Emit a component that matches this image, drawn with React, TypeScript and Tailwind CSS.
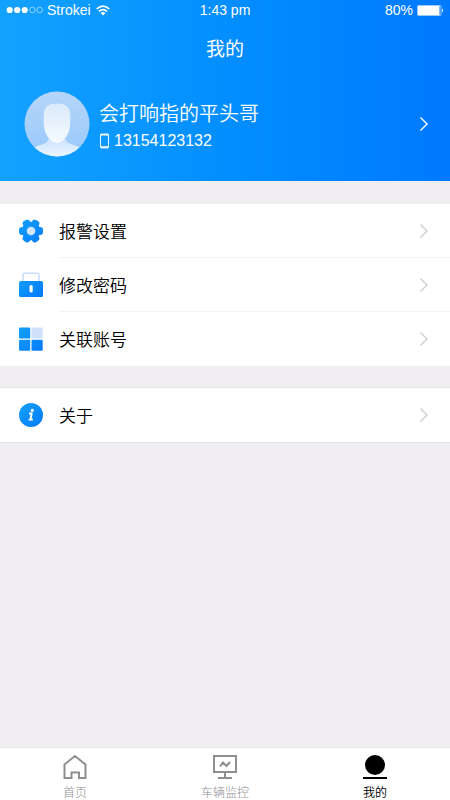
import type { ReactNode } from "react";

interface MenuItem {
  label: string;
  icon: ReactNode;
}

function BlueGradient({ id }: { id: string }) {
  return (
    <defs>
      <linearGradient id={id} x1="0" y1="0" x2="26" y2="26" gradientUnits="userSpaceOnUse">
        <stop offset="0" stopColor="#14a4fb" />
        <stop offset="1" stopColor="#0478fb" />
      </linearGradient>
    </defs>
  );
}

function GearIcon() {
  return (
    <svg width="26" height="26" viewBox="0 0 26 26" aria-hidden="true">
      <defs>
        <clipPath id="gearShape">
          <circle cx="13" cy="13" r="9.2" />
          <rect x="1" y="9" width="24" height="8" rx="3" />
          <rect x="1" y="9" width="24" height="8" rx="3" transform="rotate(60 13 13)" />
          <rect x="1" y="9" width="24" height="8" rx="3" transform="rotate(120 13 13)" />
        </clipPath>
      </defs>
      <BlueGradient id="gear" />
      <rect width="26" height="26" fill="url(#gear)" clipPath="url(#gearShape)" />
      <circle cx="13" cy="13" r="4.3" fill="#d3e6fd" />
    </svg>
  );
}

function LockIcon() {
  return (
    <svg width="26" height="26" viewBox="0 0 26 26" aria-hidden="true">
      <BlueGradient id="lock" />
      <path d="M5 9 V2.8 Q5 1.3 6.5 1.3 H19.5 Q21 1.3 21 2.8 V9" fill="none" stroke="#c9ddf8" strokeWidth="1.6" />
      <rect x="1" y="9" width="24" height="16" rx="1.5" fill="url(#lock)" />
      <rect x="11.5" y="13" width="3.2" height="7.6" rx="1.6" fill="#fff" />
    </svg>
  );
}

function GridIcon() {
  return (
    <svg width="26" height="26" viewBox="0 0 26 26" aria-hidden="true">
      <BlueGradient id="grid" />
      <rect x="1" y="1.5" width="11.2" height="11" rx="1" fill="url(#grid)" />
      <rect x="13.5" y="1.5" width="11.2" height="11" rx="1" fill="#d0e1fb" />
      <rect x="1" y="13.7" width="11.2" height="11" rx="1" fill="url(#grid)" />
      <rect x="13.5" y="13.7" width="11.2" height="11" rx="1" fill="url(#grid)" />
    </svg>
  );
}

function InfoIcon() {
  return (
    <svg width="26" height="26" viewBox="0 0 26 26" aria-hidden="true">
      <BlueGradient id="info" />
      <circle cx="13" cy="13" r="12" fill="url(#info)" />
      <circle cx="14.3" cy="8.4" r="1.6" fill="#fff" />
      <path d="M11 11.6 H13.7 L12.4 17.6 H14.8" fill="none" stroke="#fff" strokeWidth="2" strokeLinejoin="round" />
      <path d="M10.6 17.6 H13" stroke="#fff" strokeWidth="1.6" />
    </svg>
  );
}

function Chevron({ color }: { color: string }) {
  return (
    <svg width="10" height="16" viewBox="0 0 10 16" fill="none" stroke={color} strokeWidth="1.4" aria-hidden="true">
      <path d="M1.5 1.5 L8 8 L1.5 14.5" />
    </svg>
  );
}

function Avatar() {
  return (
    <svg className="shrink-0" width="66" height="66" viewBox="0 0 66 66" role="img" aria-label="头像">
      <defs>
        <linearGradient id="avatarBg" x1="0" y1="0" x2="0" y2="1">
          <stop offset="0" stopColor="#b5d6f9" />
          <stop offset="1" stopColor="#98c8fb" />
        </linearGradient>
        <linearGradient id="face" x1="0" y1="0" x2="0" y2="1">
          <stop offset="0" stopColor="#dbe9fa" />
          <stop offset="1" stopColor="#f5faff" />
        </linearGradient>
        <linearGradient id="body" x1="0" y1="0" x2="0" y2="1">
          <stop offset="0" stopColor="#c4dffc" />
          <stop offset="1" stopColor="#eef6ff" />
        </linearGradient>
        <clipPath id="avatarClip">
          <circle cx="33" cy="33" r="32.5" />
        </clipPath>
      </defs>
      <g clipPath="url(#avatarClip)">
        <rect width="66" height="66" fill="url(#avatarBg)" />
        <path d="M8 66 V58 Q13 54.5 19 53 Q25 51.5 25 45 H41 Q41 51.5 47 53 Q53 54.5 58 58 V66 Z" fill="url(#body)" />
        <path d="M33 12.5 C43 12.5 46.3 17 46.3 25 V31 C46.3 38 44.5 42.5 42 46 Q38 52 33 52 Q28 52 24 46 C21.5 42.5 19.7 38 19.7 31 V25 C19.7 17 23 12.5 33 12.5 Z" fill="url(#face)" />
      </g>
    </svg>
  );
}

function StatusBar() {
  return (
    <div className="grid grid-cols-3 items-center px-[6px] font-['Liberation_Sans',sans-serif] text-sm leading-5">
      <div className="flex items-center gap-1">
        <svg width="37" height="8" viewBox="0 0 37 8" fill="#fff" aria-hidden="true">
          <circle cx="3.7" cy="4" r="3.1" />
          <circle cx="11.2" cy="4" r="3.1" />
          <circle cx="18.7" cy="4" r="3.1" />
          <g fill="none" stroke="#fff" strokeWidth="0.7" opacity="0.75">
            <circle cx="26.4" cy="4" r="2.8" />
            <circle cx="33.6" cy="4" r="2.8" />
          </g>
        </svg>
        <span>Strokei</span>
        <svg className="ml-px" width="14" height="11" viewBox="0 0 14 11" fill="none" stroke="#fff" strokeWidth="1.6" aria-hidden="true">
          <path d="M0.7 4 Q7 -1.8 13.3 4" />
          <path d="M2.9 6.4 Q7 2.7 11.1 6.4" />
          <path d="M4.6 8 Q7 6 9.4 8 L7 10.6 Z" fill="#fff" stroke="none" />
        </svg>
      </div>
      <span className="text-center">1:43 pm</span>
      <div className="flex items-center justify-end gap-1">
        <span>80%</span>
        <svg width="27" height="11" viewBox="0 0 27 11" aria-hidden="true">
          <rect x="0.5" y="0.5" width="23.5" height="10" rx="1" fill="none" stroke="#fff" strokeWidth="0.6" />
          <rect x="1" y="1" width="21.5" height="9" fill="#fff" />
          <path d="M25 3.5 Q27 5.5 25 7.5 Z" fill="#fff" />
        </svg>
      </div>
    </div>
  );
}

function MenuGroup({ items }: { items: MenuItem[] }) {
  return (
    <ul className="bg-white">
      {items.map((item, i) => (
        <li key={item.label}>
          <button type="button" className="flex w-full items-center pl-[18px] text-left">
            {item.icon}
            <span
              className={`ml-[15px] flex h-[54px] flex-1 items-center justify-between pr-[21px] text-[17px] leading-6 text-black ${
                i < items.length - 1 ? "border-b border-[#f3f3f6]" : ""
              }`}
            >
              {item.label}
              <Chevron color="#cdccd2" />
            </span>
          </button>
        </li>
      ))}
    </ul>
  );
}

function HomeIcon() {
  return (
    <svg width="26" height="26" viewBox="0 0 26 26" fill="none" stroke="#8e8f93" strokeWidth="2" aria-hidden="true">
      <path d="M2.5 10.5 L13 2 L23.5 10.5 V24 H17 V18.5 H9.5 V24 H2.5 Z" />
    </svg>
  );
}

function MonitorIcon() {
  return (
    <svg width="26" height="26" viewBox="0 0 26 26" fill="none" stroke="#8e8f93" strokeWidth="2" aria-hidden="true">
      <rect x="2" y="2" width="22" height="16" />
      <path d="M13 18 V24 M6 24 H20" />
      <path d="M8 12.5 L11 8.5 L14.5 12 L18 8" />
    </svg>
  );
}

function MineIcon() {
  return (
    <svg width="26" height="26" viewBox="0 0 26 26" aria-hidden="true">
      <circle cx="13" cy="11" r="10" />
      <rect x="1" y="23" width="24" height="2" />
    </svg>
  );
}

const settings: MenuItem[] = [
  { label: "报警设置", icon: <GearIcon /> },
  { label: "修改密码", icon: <LockIcon /> },
  { label: "关联账号", icon: <GridIcon /> },
];

const about: MenuItem[] = [{ label: "关于", icon: <InfoIcon /> }];

const tabs = [
  { label: "首页", icon: <HomeIcon />, active: false },
  { label: "车辆监控", icon: <MonitorIcon />, active: false },
  { label: "我的", icon: <MineIcon />, active: true },
];

export default function App() {
  return (
    <div className="flex min-h-screen flex-col bg-[#f0eef1] font-['Noto_Sans_CJK_SC',sans-serif] font-[350]">
      <header className="bg-linear-to-r from-[#14a2ff] to-[#0079ff] pb-6 text-white">
        <StatusBar />
        <h1 className="pt-[14px] text-center text-[19px] leading-7 font-normal">我的</h1>
        <button type="button" className="mt-[29px] flex w-full items-center pr-[21px] pl-6 text-left">
          <Avatar />
          <span className="ml-[9px] flex flex-1 flex-col pt-[6px]">
            <span className="text-xl leading-7">会打响指的平头哥</span>
            <span className="flex items-center gap-1 font-['Liberation_Sans',sans-serif] text-base leading-7">
              <svg width="11" height="16" viewBox="0 0 11 16" aria-hidden="true">
                <rect x="1.5" y="1" width="8" height="14" rx="1" fill="none" stroke="#fff" strokeWidth="0.9" />
                <path d="M1.5 1.8 H9.5 M1.5 14 H9.5" stroke="#fff" strokeWidth="1.6" />
              </svg>
              13154123132
            </span>
          </span>
          <Chevron color="#fff" />
        </button>
      </header>

      <main className="flex flex-col pt-[23px]">
        <MenuGroup items={settings} />
        <div className="mt-[21px] border-y border-[#e3e2e6]">
          <MenuGroup items={about} />
        </div>
      </main>

      <nav className="mt-auto grid grid-cols-3 border-t border-[#e6e5e9] bg-white pt-[6px]">
        {tabs.map((tab) => (
          <a
            key={tab.label}
            href="#"
            aria-current={tab.active ? "page" : undefined}
            className={`flex flex-col items-center gap-1 text-xs leading-4 ${
              tab.active ? "text-black" : "font-light text-[#8e8f93]"
            }`}
          >
            {tab.icon}
            {tab.label}
          </a>
        ))}
      </nav>
    </div>
  );
}
